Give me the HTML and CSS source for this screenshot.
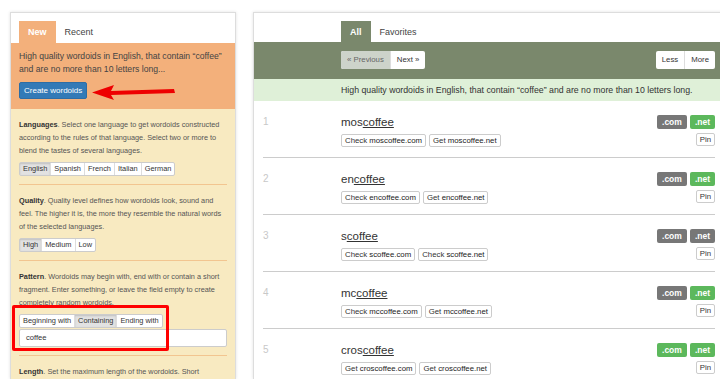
FILE: index.html
```html
<!DOCTYPE html>
<html lang="en">
<head>
  <meta charset="UTF-8" />
  <title>Wordoids</title>
  <link rel="stylesheet" href="styles.css">
</head>
<body>
  <div class="page">
    <!-- LEFT: generator -->
    <div class="side">
      <div class="tabs">
        <span class="tab active">New</span>
        <span class="tab">Recent</span>
      </div>
      <div class="intro">
        <p>High quality wordoids in English, that contain “coffee” and are no more than 10 letters long...</p>
        <button class="create">Create wordoids</button>
      </div>
      <div class="opts">
        <div class="opt">
          <p><b>Languages</b>. Select one language to get wordoids constructed according to the rules of that language. Select two or more to blend the tastes of several languages.</p>
          <div class="group">
            <span class="on">English</span><span>Spanish</span><span>French</span><span>Italian</span><span>German</span>
          </div>
        </div>
        <div class="opt">
          <p><b>Quality</b>. Quality level defines how wordoids look, sound and feel. The higher it is, the more they resemble the natural words of the selected languages.</p>
          <div class="group">
            <span class="on">High</span><span>Medium</span><span>Low</span>
          </div>
        </div>
        <div class="opt">
          <p><b>Pattern</b>. Wordoids may begin with, end with or contain a short fragment. Enter something, or leave the field empty to create completely random wordoids.</p>
          <div class="group">
            <span>Beginning with</span><span class="on">Containing</span><span>Ending with</span>
          </div>
          <div class="field">coffee</div>
        </div>
        <div class="opt">
          <p><b>Length</b>. Set the maximum length of the wordoids. Short wordoids are easier to remember.</p>
        </div>
      </div>

      <!-- annotations -->
      <svg class="arrow" width="84" height="16" viewBox="0 0 84 16">
        <polygon points="0,7.5 22,0 19,6 82,4 83,8 19,10 22,15" fill="#ee0000"/>
      </svg>
      <div class="mark"></div>
    </div>

    <!-- RIGHT: results -->
    <div class="main">
      <div class="mtabs">
        <span class="tab active">All</span>
        <span class="tab">Favorites</span>
      </div>
      <div class="bar">
        <div class="pager">
          <span class="off">« Previous</span><span>Next »</span>
        </div>
        <div class="pager">
          <span>Less</span><span>More</span>
        </div>
      </div>
      <div class="info">High quality wordoids in English, that contain “coffee” and are no more than 10 letters long.</div>

      <div class="list">
        <div class="row">
          <div class="num">1</div>
          <div>
            <div class="word">mos<u>coffee</u></div>
            <div class="acts"><span>Check <b>moscoffee.com</b></span><span>Get <b>moscoffee.net</b></span></div>
          </div>
          <div class="side-col">
            <div class="badges"><span class="free-no">.com</span><span class="free">.net</span></div>
            <span class="pin">Pin</span>
          </div>
        </div>
        <div class="row">
          <div class="num">2</div>
          <div>
            <div class="word">en<u>coffee</u></div>
            <div class="acts"><span>Check <b>encoffee.com</b></span><span>Get <b>encoffee.net</b></span></div>
          </div>
          <div class="side-col">
            <div class="badges"><span class="free-no">.com</span><span class="free">.net</span></div>
            <span class="pin">Pin</span>
          </div>
        </div>
        <div class="row">
          <div class="num">3</div>
          <div>
            <div class="word">s<u>coffee</u></div>
            <div class="acts"><span>Check <b>scoffee.com</b></span><span>Check <b>scoffee.net</b></span></div>
          </div>
          <div class="side-col">
            <div class="badges"><span class="free-no">.com</span><span class="free-no">.net</span></div>
            <span class="pin">Pin</span>
          </div>
        </div>
        <div class="row">
          <div class="num">4</div>
          <div>
            <div class="word">mc<u>coffee</u></div>
            <div class="acts"><span>Check <b>mccoffee.com</b></span><span>Get <b>mccoffee.net</b></span></div>
          </div>
          <div class="side-col">
            <div class="badges"><span class="free-no">.com</span><span class="free">.net</span></div>
            <span class="pin">Pin</span>
          </div>
        </div>
        <div class="row">
          <div class="num">5</div>
          <div>
            <div class="word">cros<u>coffee</u></div>
            <div class="acts"><span>Get <b>croscoffee.com</b></span><span>Get <b>croscoffee.net</b></span></div>
          </div>
          <div class="side-col">
            <div class="badges"><span class="free">.com</span><span class="free">.net</span></div>
            <span class="pin">Pin</span>
          </div>
        </div>
      </div>
    </div>
  </div>
</body>
</html>
```

FILE: styles.css
```css
:root {
  --orange: #f3b07b;
  --yellow: #f8eac1;
  --olive: #7a886c;
  --mint: #dff0d8;
  --blue: #337ab7;
  --txt: #333;
}
* { box-sizing: border-box; }
body {
  margin: 0;
  background: #fff;
  font-family: 'Liberation Sans', Arial, sans-serif;
  color: var(--txt);
  overflow: hidden;
}
p { margin: 0; }
.page {
  display: flex;
  gap: 17px;
  padding: 12px 0 0 10px;
  width: 720px;
  height: 379px;
  overflow: hidden;
}
/* --- LEFT PANEL --- */
.side {
  position: relative;
  width: 226px;
  flex: none;
  border: 1px solid #ddd;
  border-bottom: none;
  box-shadow: 0 0 3px rgba(0, 0, 0, 0.12);
  background: var(--yellow);
}
.tabs, .mtabs {
  display: flex;
  background: #fff;
  font-size: 9px;
}
.tabs { padding: 8px 8px 0; height: 30px; }
.tab {
  line-height: 22px;
  padding: 0 9px;
  color: #444;
}
.tabs .tab.active {
  background: var(--orange);
  color: #fff;
  font-weight: bold;
}
.intro {
  background: var(--orange);
  padding: 7px 8px 10px;
  font-size: 8.65px;
  line-height: 13px;
  color: #444;
}
.create {
  margin-top: 6px;
  height: 17px;
  padding: 0 4px;
  font: 8px 'Liberation Sans', Arial, sans-serif;
  color: #fff;
  background: var(--blue);
  border: 1px solid #2e6da4;
  border-radius: 2px;
}
.opt {
  margin: 0 8px;
  padding: 9px 0 8px;
  border-bottom: 1px solid #f2c590;
  font-size: 7.3px;
  line-height: 13px;
  color: #555;
}
.opt b { color: #333; }
.group {
  display: inline-flex;
  margin-top: 5px;
  background: #fff;
  border: 1px solid #ccc;
  border-radius: 2px;
}
.group span {
  padding: 0 3px;
  line-height: 12px;
  font-size: 7.4px;
  color: #333;
  border-left: 1px solid #ddd;
}
.group span:first-child { border-left: none; }
.group .on {
  background: #e2e2e2;
  box-shadow: inset 0 1px 2px rgba(0, 0, 0, 0.15);
}
.field {
  height: 18px;
  margin-top: 1px;
  padding-left: 6px;
  line-height: 16px;
  font-size: 7.6px;
  color: #333;
  background: #fff;
  border: 1px solid #ccc;
  border-radius: 2px;
}
.arrow {
  position: absolute;
  left: 81px;
  top: 72px;
}
.mark {
  position: absolute;
  left: 1px;
  top: 292px;
  width: 157px;
  height: 46px;
  border: 3px solid #f00;
  border-radius: 2px;
}
/* --- RIGHT PANEL --- */
.main {
  width: 472px;
  flex: none;
  border: 1px solid #ddd;
  border-bottom: none;
  box-shadow: 0 0 3px rgba(0, 0, 0, 0.12);
  background: #fff;
}
.mtabs { padding: 8px 0 0 87px; height: 29px; }
.mtabs .tab.active {
  background: var(--olive);
  color: #fff;
  font-weight: bold;
  padding: 0 9px;
}
.bar {
  display: flex;
  justify-content: space-between;
  align-items: flex-start;
  height: 37px;
  padding: 9px 9px 0 87px;
  background: var(--olive);
}
.pager {
  display: flex;
  background: #fff;
  border-radius: 2px;
  overflow: hidden;
}
.pager span {
  line-height: 18px;
  padding: 0 6px;
  font-size: 7.8px;
  color: #333;
  border-left: 1px solid #ddd;
}
.pager span:first-child { border-left: none; }
.pager .off { background: #cdd3ca; color: #666; }
.info {
  height: 22px;
  line-height: 22px;
  padding-left: 87px;
  font-size: 8.75px;
  background: var(--mint);
}
.list { padding: 0 9px; }
.row {
  display: grid;
  grid-template-columns: 78px 1fr auto;
  padding: 14px 0 10px;
  border-bottom: 1px solid #ccc;
}
.num {
  font-size: 10px;
  line-height: 14px;
  color: #c8c8c8;
}
.word {
  font-size: 11.5px;
  line-height: 15px;
  color: #333;
}
.acts {
  display: flex;
  gap: 3px;
  margin-top: 4px;
}
.acts span, .pin {
  line-height: 11px;
  padding: 0 3px;
  font-size: 7.8px;
  color: #333;
  background: #fff;
  border: 1px solid #ccc;
  border-radius: 2px;
}
.acts b { font-weight: normal; color: #222; }
.side-col {
  display: flex;
  flex-direction: column;
  align-items: flex-end;
  gap: 4px;
}
.badges {
  display: flex;
  gap: 3px;
}
.badges span {
  line-height: 14px;
  padding: 0 5px;
  font-size: 8.5px;
  font-weight: bold;
  color: #fff;
  border-radius: 2px;
}
.free-no { background: #777; }
.free { background: #5cb85c; }
```
